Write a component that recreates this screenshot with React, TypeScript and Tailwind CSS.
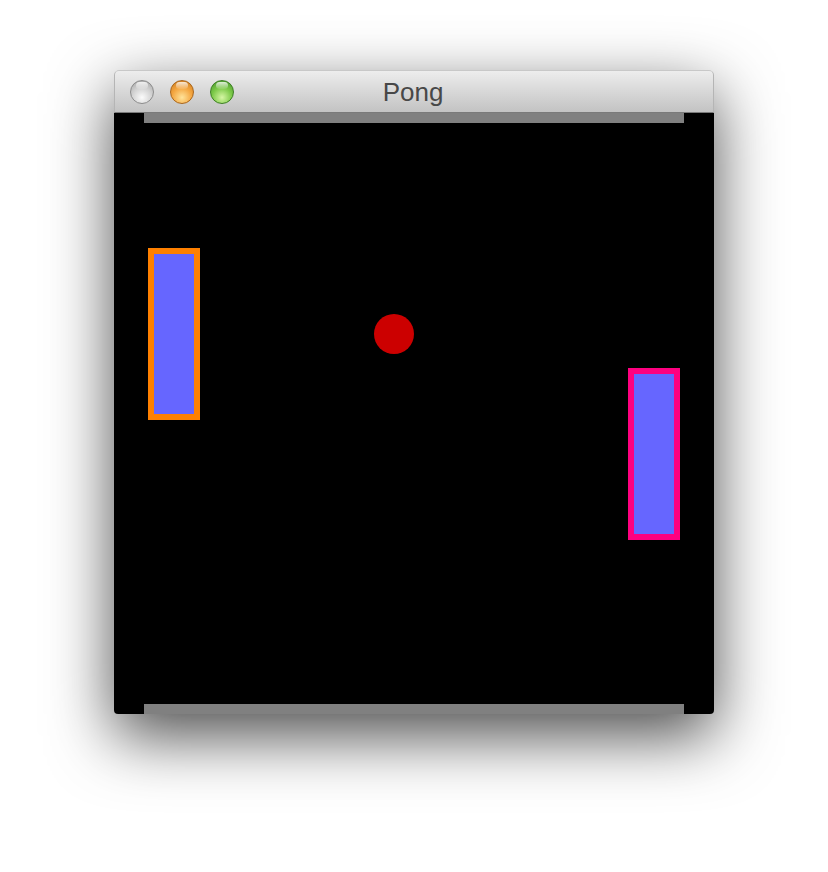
import React from 'react'

// traffic-light buttons of the window title bar
const lights = [
  'bg-[radial-gradient(circle_at_50%_75%,#fbfbfb_0%,#d2d2d2_50%,#a0a0a0_100%)] border-[#8c8c8c]',
  'bg-[radial-gradient(circle_at_50%_75%,#ffe39a_0%,#f4a640_50%,#c8771c_100%)] border-[#a9661d]',
  'bg-[radial-gradient(circle_at_50%_75%,#d6f6a4_0%,#7cc948_50%,#42902a_100%)] border-[#3d7f24]',
]

export default function App() {
  return (
    <div className="min-h-[872px] w-full bg-white pt-[70px]">
      <div className="mx-auto w-[600px] rounded-[5px] shadow-[0_22px_64px_rgba(0,0,0,0.7)]">
        {/* title bar */}
        <div className="relative flex h-[43px] items-center gap-[16px] rounded-t-[5px] border-x border-t border-b border-x-[#b5b5b5] border-t-[#c8c8c8] border-b-[#7a7a7a] bg-gradient-to-b from-[#ededed] to-[#c3c3c3] pl-[15px]">
          {lights.map((c, i) => (
            <div key={i} className={`relative h-[24px] w-[24px] rounded-full border ${c}`}>
              <div className="absolute left-[5px] top-[1px] h-[7px] w-[12px] rounded-full bg-gradient-to-b from-white/80 to-white/10" />
            </div>
          ))}
          <div
            className="absolute inset-x-0 top-[6px] pr-[2px] text-center text-[26px] leading-[30px] text-[#484848]"
            style={{ fontFamily: '"Liberation Sans", Arial, sans-serif' }}
          >
            Pong
          </div>
        </div>

        {/* game canvas */}
        <div className="relative flex h-[601px] flex-col justify-between overflow-hidden rounded-b-[4px] bg-black px-[30px]">
          <div className="h-[10px] bg-[#808080]" />
          <div className="h-[10px] bg-[#808080]" />

          <div className="absolute left-[34px] top-[135px] h-[172px] w-[52px] border-[6px] border-[#ff8000] bg-[#6666ff]" />
          <div className="absolute left-[514px] top-[255px] h-[172px] w-[52px] border-[6px] border-[#ff0080] bg-[#6666ff]" />
          <div className="absolute left-[260px] top-[201px] h-[40px] w-[40px] rounded-full bg-[#cc0000]" />
        </div>
      </div>
    </div>
  )
}
